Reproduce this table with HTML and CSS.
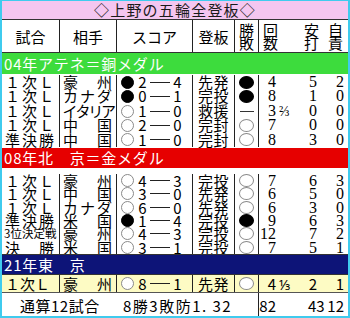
FILE: index.html
```html
<!DOCTYPE html>
<html lang="ja">
<head>
<meta charset="utf-8">
<link rel="stylesheet" href="styles.css">
</head>
<body>
<div class="board">
  <div class="title">◇上野の五輪全登板◇</div>

  <div class="row head">
    <div>試合</div>
    <div>相手</div>
    <div>スコア</div>
    <div>登板</div>
    <div class="stack"><span>勝</span><span>敗</span></div>
    <div class="hstats">
      <span class="stack h1"><span>回</span><span>数</span></span>
      <span class="stack h2"><span>安</span><span>打</span></span>
      <span class="stack h3"><span>自</span><span>責</span></span>
    </div>
  </div>

  <div class="band green">04年アテネ＝銅メダル</div>
  <div class="group g1">
    <div class="row">
      <div class="just c1"><span>１</span><span>次</span><span>Ｌ</span></div>
      <div class="just c2"><span>豪</span><span>州</span></div>
      <div class="score"><i class="dot b"></i><span class="n">2</span><i class="dash"></i><span class="n">4</span></div>
      <div class="kind">先発</div>
      <div class="res"><i class="big b"></i></div>
      <div class="stats"><span class="inn"><b>4</b></span><span class="hit">5</span><span class="er">2</span></div>
    </div>
    <div class="row">
      <div class="just c1"><span>１</span><span>次</span><span>Ｌ</span></div>
      <div class="just c2"><span>カ</span><span>ナ</span><span>ダ</span></div>
      <div class="score"><i class="dot b"></i><span class="n">0</span><i class="dash"></i><span class="n">1</span></div>
      <div class="kind">完投</div>
      <div class="res"><i class="big b"></i></div>
      <div class="stats"><span class="inn"><b>8</b></span><span class="hit">1</span><span class="er">0</span></div>
    </div>
    <div class="row">
      <div class="just c1"><span>１</span><span>次</span><span>Ｌ</span></div>
      <div class="just c2 palt"><span>イ</span><span>タ</span><span>リ</span><span>ア</span></div>
      <div class="score"><i class="dot"></i><span class="n">1</span><i class="dash"></i><span class="n">0</span></div>
      <div class="kind">救援</div>
      <div class="res"><i class="bar"></i></div>
      <div class="stats"><span class="inn"><b>3</b><span class="frac">⅔</span></span><span class="hit">0</span><span class="er">0</span></div>
    </div>
    <div class="row">
      <div class="just c1"><span>１</span><span>次</span><span>Ｌ</span></div>
      <div class="just c2"><span>中</span><span>国</span></div>
      <div class="score"><i class="dot"></i><span class="n">2</span><i class="dash"></i><span class="n">0</span></div>
      <div class="kind">完封</div>
      <div class="res"><i class="big"></i></div>
      <div class="stats"><span class="inn"><b>7</b></span><span class="hit">0</span><span class="er">0</span></div>
    </div>
    <div class="row">
      <div class="just c1"><span>準</span><span>決</span><span>勝</span></div>
      <div class="just c2"><span>中</span><span>国</span></div>
      <div class="score"><i class="dot"></i><span class="n">1</span><i class="dash"></i><span class="n">0</span></div>
      <div class="kind">完封</div>
      <div class="res"><i class="big"></i></div>
      <div class="stats"><span class="inn"><b>8</b></span><span class="hit">3</span><span class="er">0</span></div>
    </div>
  </div>

  <div class="band red">08年北　京＝金メダル</div>
  <div class="group g2">
    <div class="row">
      <div class="just c1"><span>１</span><span>次</span><span>Ｌ</span></div>
      <div class="just c2"><span>豪</span><span>州</span></div>
      <div class="score"><i class="dot"></i><span class="n">4</span><i class="dash"></i><span class="n">3</span></div>
      <div class="kind">完投</div>
      <div class="res"><i class="big"></i></div>
      <div class="stats"><span class="inn"><b>7</b></span><span class="hit">6</span><span class="er">3</span></div>
    </div>
    <div class="row">
      <div class="just c1"><span>１</span><span>次</span><span>Ｌ</span></div>
      <div class="just c2"><span>中</span><span>国</span></div>
      <div class="score"><i class="dot"></i><span class="n">3</span><i class="dash"></i><span class="n">0</span></div>
      <div class="kind">先発</div>
      <div class="res"><i class="big"></i></div>
      <div class="stats"><span class="inn"><b>6</b></span><span class="hit">5</span><span class="er">0</span></div>
    </div>
    <div class="row">
      <div class="just c1"><span>１</span><span>次</span><span>Ｌ</span></div>
      <div class="just c2"><span>カ</span><span>ナ</span><span>ダ</span></div>
      <div class="score"><i class="dot"></i><span class="n">6</span><i class="dash"></i><span class="n">0</span></div>
      <div class="kind">先発</div>
      <div class="res"><i class="big"></i></div>
      <div class="stats"><span class="inn"><b>6</b></span><span class="hit">3</span><span class="er">0</span></div>
    </div>
    <div class="row">
      <div class="just c1"><span>準</span><span>決</span><span>勝</span></div>
      <div class="just c2"><span>米</span><span>国</span></div>
      <div class="score"><i class="dot b"></i><span class="n">1</span><i class="dash"></i><span class="n">4</span></div>
      <div class="kind">完投</div>
      <div class="res"><i class="big b"></i></div>
      <div class="stats"><span class="inn"><b>9</b></span><span class="hit">6</span><span class="er">3</span></div>
    </div>
    <div class="row">
      <div class="just c1 small"><span>3</span><span>位</span><span>決</span><span>定</span><span>戦</span></div>
      <div class="just c2"><span>豪</span><span>州</span></div>
      <div class="score"><i class="dot"></i><span class="n">4</span><i class="dash"></i><span class="n">3</span></div>
      <div class="kind">完投</div>
      <div class="res"><i class="big"></i></div>
      <div class="stats"><span class="inn"><b>12</b></span><span class="hit">7</span><span class="er">2</span></div>
    </div>
    <div class="row">
      <div class="just c1"><span>決</span><span>勝</span></div>
      <div class="just c2"><span>米</span><span>国</span></div>
      <div class="score"><i class="dot"></i><span class="n">3</span><i class="dash"></i><span class="n">1</span></div>
      <div class="kind">完投</div>
      <div class="res"><i class="big"></i></div>
      <div class="stats"><span class="inn"><b>7</b></span><span class="hit">5</span><span class="er">1</span></div>
    </div>
  </div>

  <div class="band navy">21年東　京</div>
  <div class="row yellow">
    <div class="c1 plain">１次Ｌ</div>
    <div class="just c2"><span>豪</span><span>州</span></div>
    <div class="score"><i class="dot"></i><span class="n">8</span><i class="dash"></i><span class="n">1</span></div>
    <div class="kind">先発</div>
    <div class="res"><i class="big"></i></div>
    <div class="stats sans"><span class="inn"><b>4</b><span class="frac">⅓</span></span><span class="hit">2</span><span class="er">1</span></div>
  </div>

  <div class="total">
    <div class="tl"><span class="t1">通算12試合</span><span class="t2">8勝3敗防1. 32</span></div>
    <div class="stats sans"><span class="inn"><b>82</b></span><span class="hit">43</span><span class="er">12</span></div>
  </div>
</div>
</body>
</html>
```

FILE: styles.css
```css
* { box-sizing: border-box; margin: 0; padding: 0; }
html, body { width: 350px; height: 318px; overflow: hidden; background: #fff; }
body { font-family: "Noto Sans CJK JP", "Noto Sans", sans-serif; color: #000; }
i, b { font-style: normal; font-weight: normal; }

.board {
  width: 350px;
  height: 318px;
  border: solid #3fcbee;
  border-width: 1px 2px 2px 2px;
  display: flex;
  flex-direction: column;
}

.title {
  height: 19px;
  flex: none;
  background: #f4c6f0;
  border-bottom: 1px solid #333;
  text-align: center;
  font-size: 15px;
  line-height: 18px;
  letter-spacing: 1.2px;
  color: #1a1a1a;
}

.row {
  display: grid;
  grid-template-columns: 57px 57px 76px 42px 24px 90px;
  flex: none;
}
.row > div + div { border-left: 1px solid #222; }

.head { height: 32px; font-size: 15px; }
.head > div { display: flex; align-items: center; justify-content: center; }
.stack { display: flex; flex-direction: column; line-height: 13px; }
.head > div.hstats {
  display: grid;
  grid-template-columns: 33px 26px 30px;
  align-items: center;
  justify-content: start;
}
.h1 { margin-left: 4px; }
.h2 { margin-left: 12px; }
.h3 { margin-left: 10px; }

.band {
  flex: none;
  color: #fff;
  font-size: 15px;
  padding-left: 2px;
  letter-spacing: 0.8px;
}
.green { height: 22px; line-height: 21px; background: #3ddc3d; border-top: 1px solid #333; }
.red { height: 20px; line-height: 20px; background: #e60000; }
.navy { height: 20px; line-height: 19px; background: #0d1478; border-top: 1px solid #333; }

.group { flex: none; font-size: 15px; }
.g1 { padding: 1px 0; }
.g1 .row { height: 14.4px; line-height: 14.4px; }
.g2 { padding-top: 6px; }
.g2 .row { height: 13.33px; line-height: 13.33px; }

.just { display: flex; justify-content: space-between; }
.c1 { padding: 0 5px 0 3px; }
.c2 { padding: 0 4px 0 3px; }
.palt { font-feature-settings: "palt"; }
.small { font-size: 11.5px; padding: 0 3px 0 2px; }

.score { display: flex; align-items: center; padding-left: 4px; }
.dot {
  display: block;
  width: 13px;
  height: 13px;
  border-radius: 50%;
  border: 1px solid #8a8a8a;
  background: #fff;
  margin-right: 4px;
}
.dot.b { background: #000; border-color: #000; }
.n { display: block; width: 9px; text-align: center; }
.dash { display: block; width: 20px; height: 1px; background: #222; margin: 0 3px; }

.kind { text-align: center; letter-spacing: 0.5px; }

.res { display: flex; align-items: center; justify-content: center; }
.big {
  display: block;
  width: 15px;
  height: 13px;
  border-radius: 50%;
  border: 1px solid #8a8a8a;
  background: #fff;
}
.big.b { background: #000; border-color: #000; }
.bar { display: block; width: 14px; height: 1px; background: #333; }

.stats {
  display: grid;
  grid-template-columns: 33px 26px 30px;
  font-family: "Liberation Serif", "Noto Sans CJK JP", serif;
  font-size: 16px;
}
.stats.sans { font-family: "Noto Sans CJK JP", "Noto Sans", sans-serif; font-size: 15px; }
.inn { white-space: nowrap; }
.inn b { display: inline-block; width: 17px; text-align: right; }
.frac { margin-left: 3px; font-size: 14px; }
.hit { text-align: right; padding-right: 1px; }
.er { text-align: right; padding-right: 4px; }

.yellow {
  height: 18px;
  line-height: 17px;
  background: #fdfbc4;
  border-top: 1px solid #333;
  font-size: 15px;
}
.plain { padding-left: 3px; }

.total {
  flex: none;
  display: grid;
  grid-template-columns: 256px 90px;
  height: 24px;
  border-top: 1px solid #555;
  font-size: 15px;
  line-height: 20px;
  padding-top: 3px;
}
.total > .stats { border-left: 1px solid #222; margin-top: -3px; padding-top: 3px; }
.total .hit { text-align: left; padding-left: 16px; }
.tl { display: flex; padding-left: 18px; white-space: nowrap; }
.t1 { flex: none; width: 103px; letter-spacing: 0.5px; }
.t2 { flex: none; letter-spacing: 1.5px; }
```
